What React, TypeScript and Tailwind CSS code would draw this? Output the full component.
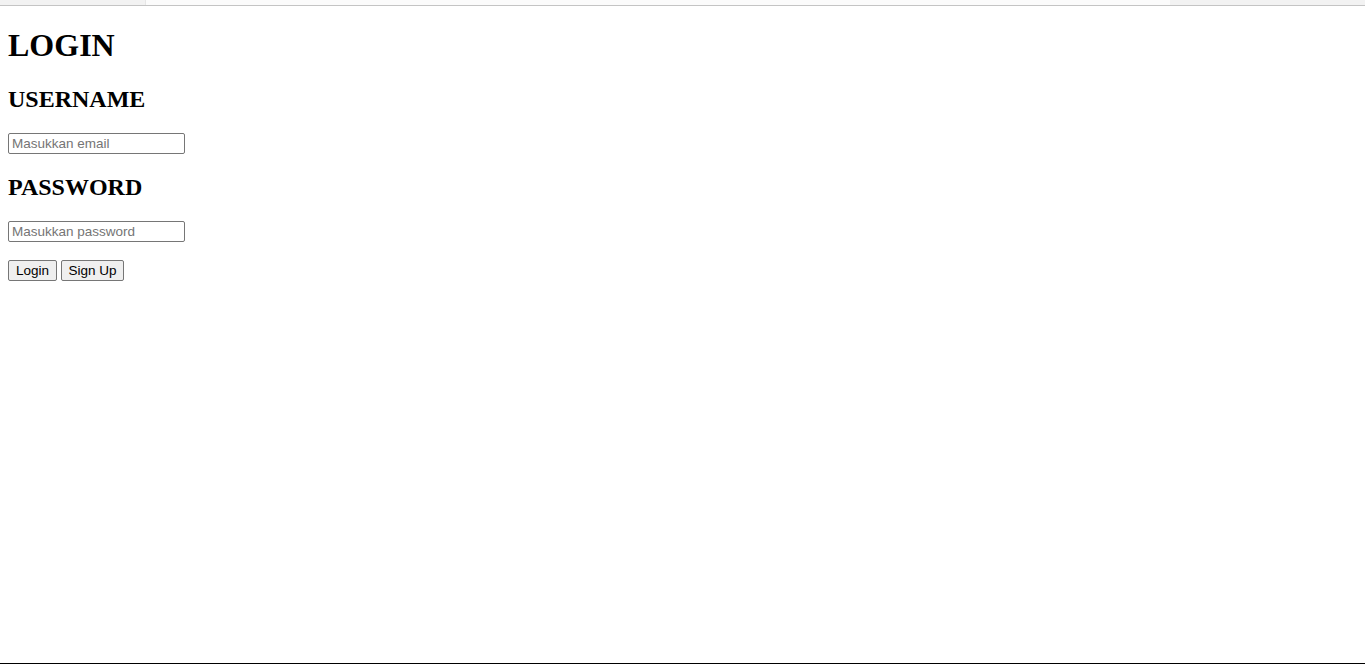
import React, { FormEvent } from 'react';

function App() {
  const handleLogin = (event: FormEvent) => {
    event.preventDefault();
  };

  return (
    <div className="h-[664px] w-full flex flex-col bg-white overflow-hidden">
      {/* browser chrome strip */}
      <div className="h-[5px] w-full flex bg-[#f2f2f2]">
        <div className="w-[145px]" />
        <div className="w-[1025px] bg-[#fbfbfb] border-l border-[#e6e6e6]" />
        <div className="flex-1" />
      </div>
      <div className="h-px w-full bg-[#c4c4c4]" />

      <div className="flex-1 px-2 font-['Liberation_Serif',serif] text-black">
        <h1 className="mt-[21px] text-[32px] leading-[37px] font-bold">LOGIN</h1>
        <form onSubmit={handleLogin} className="flex flex-col items-start">
          <h2 className="mt-[21px] text-[24px] leading-[28px] font-bold">USERNAME</h2>
          <input
            type="text"
            name="email"
            placeholder="Masukkan email"
            className="mt-[20px] w-[177px] h-[21px] pl-[3px] pr-[2px] border border-[#767676] rounded-[2px] font-['Liberation_Sans',Arial,sans-serif] text-[13.5px] placeholder:text-[#757575] outline-none"
          />
          <h2 className="mt-[19px] text-[24px] leading-[28px] font-bold">PASSWORD</h2>
          <input
            type="password"
            name="password"
            placeholder="Masukkan password"
            className="mt-[20px] w-[177px] h-[21px] pl-[3px] pr-[2px] border border-[#767676] rounded-[2px] font-['Liberation_Sans',Arial,sans-serif] text-[13.5px] placeholder:text-[#757575] outline-none"
          />
          <div className="mt-[18px] flex gap-[4px] font-['Liberation_Sans',Arial,sans-serif] text-[13.5px]">
            <button type="submit" className="w-[49px] h-[21px] bg-[#efefef] border border-[#767676] rounded-[2px] leading-none">
              Login
            </button>
            <button type="button" className="w-[63px] h-[21px] bg-[#efefef] border border-[#767676] rounded-[2px] leading-none">
              Sign Up
            </button>
          </div>
        </form>
      </div>

      <div className="h-px w-full bg-black" />
    </div>
  );
}

export default App;
